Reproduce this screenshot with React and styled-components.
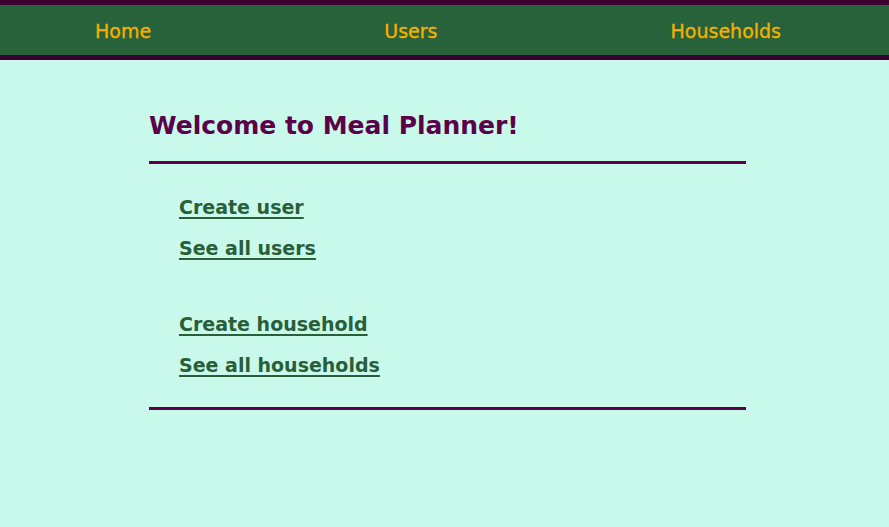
import React from "react";
import styled, { createGlobalStyle } from "styled-components";

const Global = createGlobalStyle`
  html, body { margin: 0; padding: 0; }
  body {
    background: #c9f9ea;
    font-family: "DejaVu Sans", "Liberation Sans", sans-serif;
  }
`;

const Nav = styled.nav`
  display: flex;
  justify-content: space-between;
  align-items: center;
  height: 50px;
  box-sizing: content-box;
  padding: 0 108px 0 95px;
  background: #27623a;
  border-top: 5px solid #3d0033;
  border-bottom: 5px solid #3d0033;
`;

const NavLink = styled.a`
  color: #f7b100;
  font-size: 19px;
  line-height: 24px;
  padding-top: 2px;
  text-decoration: none;
  -webkit-text-stroke: 0.3px #f7b100;
`;

const Main = styled.main`
  width: 597px;
  margin: 0 0 0 149px;
  padding-top: 50px;
`;

const Title = styled.h1`
  margin: 0;
  color: #5c0049;
  font-size: 25px;
  font-weight: bold;
  line-height: 32px;
`;

const Rule = styled.hr`
  margin: ${(p) => p.$top}px 0 0;
  border: none;
  height: 3px;
  background: #5c0049;
`;

const LinkGroup = styled.ul`
  list-style: none;
  margin: ${(p) => p.$top}px 0 0;
  padding: 0 0 0 30px;
  display: flex;
  flex-direction: column;
  gap: 17px;
`;

const Link = styled.a`
  color: #285e38;
  font-size: 19px;
  font-weight: bold;
  line-height: 24px;
  text-decoration: underline;
  text-decoration-thickness: 2px;
  text-underline-offset: 3px;
`;

export default function App() {
  return (
    <>
      <Global />
      <Nav>
        <NavLink href="#">Home</NavLink>
        <NavLink href="#">Users</NavLink>
        <NavLink href="#">Households</NavLink>
      </Nav>
      <Main>
        <Title>Welcome to Meal Planner!</Title>
        <Rule $top={19} />
        <LinkGroup $top={31}>
          <li><Link href="#">Create user</Link></li>
          <li><Link href="#">See all users</Link></li>
        </LinkGroup>
        <LinkGroup $top={52}>
          <li><Link href="#">Create household</Link></li>
          <li><Link href="#">See all households</Link></li>
        </LinkGroup>
        <Rule $top={30} />
      </Main>
    </>
  );
}
